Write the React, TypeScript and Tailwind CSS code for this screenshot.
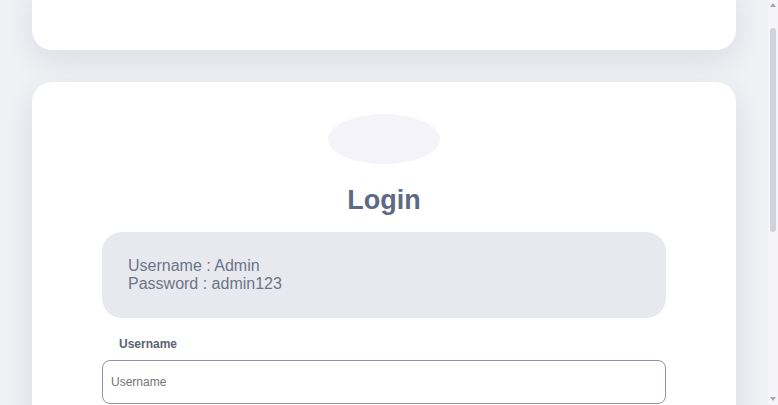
import { useEffect, useRef } from "react";

function ScrollTrack() {
  return (
    <div className="flex h-screen w-[10px] shrink-0 flex-col items-center bg-[#f5f5f9]">
      <div className="mt-[3px] h-0 w-0 border-x-[3px] border-b-[4px] border-x-transparent border-b-[#a3a7b3]" />
      <div className="mt-[21px] h-[204px] w-[6px] rounded-full bg-[#cfd2dc]" />
      <div className="mt-auto mb-[4px] h-0 w-0 border-x-[3px] border-t-[4px] border-x-transparent border-t-[#a3a7b3]" />
    </div>
  );
}

export default function App() {
  const scroller = useRef<HTMLDivElement>(null);

  useEffect(() => {
    if (scroller.current) scroller.current.scrollTop = 51;
  }, []);

  return (
    <div className="flex h-screen bg-[#f0f1f5] font-['Liberation_Sans',Arial,sans-serif]">
      <div ref={scroller} className="flex-1 overflow-y-scroll [scrollbar-width:none] [&::-webkit-scrollbar]:hidden">
        <div className="flex flex-col gap-8 px-8 pt-8 pb-8">
          <div className="h-[69px] rounded-[20px] bg-white shadow-[0_10px_30px_rgba(20,25,45,0.09)]" />

          <div className="min-h-[624px] rounded-[20px] bg-white px-[70px] pt-8 pb-10 shadow-[0_10px_30px_rgba(20,25,45,0.09)]">
            <div className="mx-auto h-[50px] w-[112px] rounded-[50%] bg-[#f4f4fa]" />
            <h1 className="mt-[21px] text-center text-[27px] font-bold leading-[31px] text-[#5e6a84]">Login</h1>

            <div className="mt-[16px] rounded-[20px] bg-[#e8e9ee] px-[26px] pt-[25px] pb-[25px] text-[16px] leading-[18px] text-[#6b7589]">
              <p>Username : Admin</p>
              <p>Password : admin123</p>
            </div>

            <form className="mt-[19px] flex flex-col" onSubmit={(e) => e.preventDefault()}>
              <label className="pl-[17px] text-[12px] font-bold leading-[14px] text-[#5b6272]">Username</label>
              <input
                autoFocus
                type="text"
                placeholder="Username"
                className="mt-[9px] h-11 w-full rounded-lg border border-[#8c96a7] bg-white px-2 text-[12px] text-[#333] placeholder-[#757575] outline-none"
              />

              <label className="mt-[18px] pl-[17px] text-[12px] font-bold leading-[14px] text-[#5b6272]">Password</label>
              <input
                type="password"
                placeholder="Password"
                className="mt-[10px] h-11 w-full rounded-lg border border-[#c5cad3] bg-white px-2 text-[12px] text-[#333] placeholder-[#757575] outline-none"
              />

              <button className="mt-8 h-11 w-full rounded-lg bg-[#5e6a84] text-[14px] font-bold text-white">Login</button>
            </form>
          </div>
        </div>
      </div>
      <ScrollTrack />
    </div>
  );
}
